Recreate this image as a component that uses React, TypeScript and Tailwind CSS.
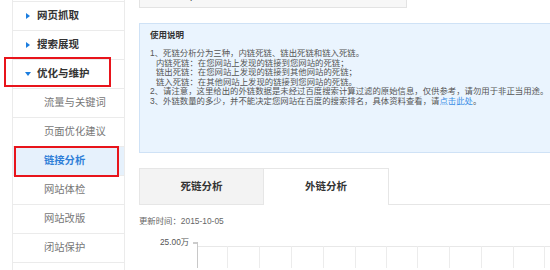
const font = { fontFamily: '"Liberation Sans", "Noto Sans CJK SC", sans-serif' };

const menu = [
  { label: "网页抓取", kind: "group" },
  { label: "搜索展现", kind: "group" },
  { label: "优化与维护", kind: "open" },
  { label: "流量与关键词", kind: "sub" },
  { label: "页面优化建议", kind: "sub" },
  { label: "链接分析", kind: "active" },
  { label: "网站体检", kind: "sub" },
  { label: "网站改版", kind: "sub" },
  { label: "闭站保护", kind: "sub" },
  { label: "", kind: "sub" },
];

const gridX = [30, 62, 94, 126, 158, 189, 220, 252, 284, 316, 347];

function Arrow({ open }: { open: boolean }) {
  return open ? (
    <svg width="6" height="4" viewBox="0 0 6 4" className="shrink-0">
      <path d="M0 0h6L3 4z" fill="#1b7ddf" />
    </svg>
  ) : (
    <svg width="4" height="6" viewBox="0 0 4 6" className="ml-[1px] mr-[1px] shrink-0">
      <path d="M0 0l4 3-4 3z" fill="#1b7ddf" />
    </svg>
  );
}

function Sidebar() {
  return (
    <div className="ml-[12px] w-[113px] shrink-0 border-x border-[#ebebeb] bg-white">
      <div className="h-[2px] border-b border-[#ebebeb]" />
      {menu.map((m, i) => {
        if (m.kind === "group" || m.kind === "open") {
          return (
            <div key={i} className="flex h-[29px] items-center gap-[6px] border-b border-[#ebebeb] pl-[12px]">
              <Arrow open={m.kind === "open"} />
              <span className="text-[10.5px] font-bold text-[#333]">{m.label}</span>
            </div>
          );
        }
        return (
          <div
            key={i}
            className={`flex h-[29px] items-center border-b border-[#ebebeb] pl-[31px] text-[10.3px] ${
              m.kind === "active" ? "bg-[#e6f1fc] font-bold text-[#2f7fd8]" : "text-[#777]"
            }`}
          >
            {m.label}
          </div>
        );
      })}
    </div>
  );
}

function Notes() {
  return (
    <div className="mt-[15px] h-[130px] w-[430px] border border-[#cfe2f6] bg-[#eaf4fe] pl-[10px] pt-[7px] text-[8.4px] leading-[9.45px] text-[#555]">
      <div className="text-[8.5px] font-bold text-[#333]">使用说明</div>
      <div className="mt-[9px]">
        <div>1、死链分析分为三种，内链死链、链出死链和链入死链。</div>
        <div className="pl-[6px]">内链死链：在您网站上发现的链接到您网站的死链；</div>
        <div className="pl-[6px]">链出死链：在您网站上发现的链接到其他网站的死链；</div>
        <div className="pl-[6px]">链入死链：在其他网站上发现的链接到您网站的死链。</div>
        <div className="whitespace-nowrap">2、请注意，这里给出的外链数据是未经过百度搜索计算过滤的原始信息，仅供参考，请勿用于非正当用途。</div>
        <div>
          3、外链数量的多少，并不能决定您网站在百度的搜索排名，具体资料查看，请<span className="text-[#3a8ee6]">点击此处</span>。
        </div>
      </div>
    </div>
  );
}

function Tabs() {
  return (
    <div className="mt-[15px] flex h-[37px] w-[430px]">
      <div className="flex w-[125px] items-center justify-center border border-[#e6e6e6] bg-[#f3f3f3] text-[10.5px] font-bold text-[#333]">
        死链分析
      </div>
      <div className="flex w-[125px] items-center justify-center border-r border-t border-[#e6e6e6] bg-white text-[10.5px] font-bold text-[#333]">
        外链分析
      </div>
      <div className="flex-1 border-b border-[#e6e6e6]" />
    </div>
  );
}

function Chart() {
  return (
    <svg width="420" height="34" className="mt-[8px] block">
      <text x="21" y="11" fontSize="8.3" fill="#555" style={font}>
        25.00万
      </text>
      <line x1="54" y1="9" x2="58" y2="9" stroke="#999" />
      <line x1="58" y1="12.5" x2="420" y2="12.5" stroke="#e8e8e8" />
      {gridX.map((x) => (
        <line key={x} x1={58 + x + 0.5} y1="12" x2={58 + x + 0.5} y2="34" stroke="#ececec" />
      ))}
      <line x1="58.5" y1="8" x2="58.5" y2="34" stroke="#c8c8c8" />
    </svg>
  );
}

export default function App() {
  return (
    <div className="relative flex h-[270px] w-[550px] overflow-hidden bg-white" style={font}>
      <Sidebar />
      <div className="ml-[14px] w-[430px] shrink-0">
        <div className="-mt-[13px] flex h-[21px] w-[268px] items-end border border-[#e3e3e3] bg-[#f7f7f7] pb-[4px] pl-[10px] text-[10px] text-[#444]">
          www.hezpl.com
        </div>
        <Notes />
        <Tabs />
        <div className="mt-[11px] text-[8.4px] leading-[10px] text-[#666]">更新时间：2015-10-05</div>
        <Chart />
      </div>
      <div className="absolute left-[4px] top-[57px] h-[30px] w-[107px] border-2 border-[#e8141b]" />
      <div className="absolute left-[14px] top-[146px] h-[31px] w-[105px] border-2 border-[#e8141b]" />
    </div>
  );
}
